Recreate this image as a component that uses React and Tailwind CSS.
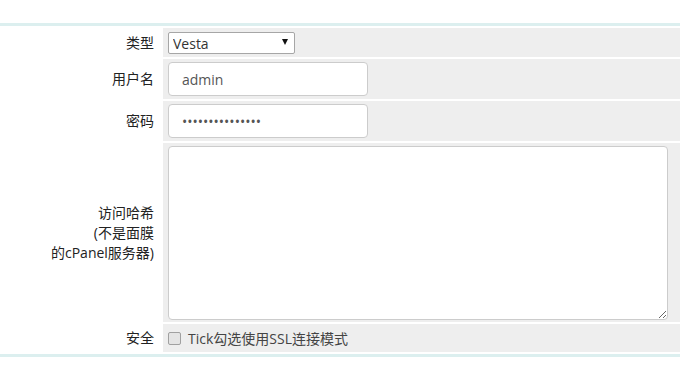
import { useState } from 'react'

const font = { fontFamily: '"Open Sans", "Noto Sans CJK SC", sans-serif' }

function Row({ label, height, children, className = '' }) {
  return (
    <div className="flex gap-[2px]">
      <div
        className="w-[161px] flex items-center justify-end pr-[7px] text-right text-[14px] leading-[20px] text-[#222]"
      >
        {label}
      </div>
      <div className={`flex-1 bg-[#eeeeee] pl-[5px] ${height} ${className}`}>{children}</div>
    </div>
  )
}

export default function App() {
  const [ssl, setSsl] = useState(false)

  return (
    <div className="w-[680px] h-[366px] bg-white pt-[23px]" style={font}>
      <div className="h-[3px] bg-[#dcefef]" />
      <div className="flex flex-col gap-[2px] mt-[2px]">
        <Row label="类型" height="h-[29px]" className="pt-[3px]">
          <div className="relative w-[127px] h-[22px]">
            <select
              defaultValue="Vesta"
              className="appearance-none w-full h-full border border-[#a6a6a6] rounded-[2px] bg-white pl-[4px] text-[14px] text-[#333] outline-none"
              style={font}
            >
              <option>Vesta</option>
              <option>cPanel</option>
            </select>
            <span className="absolute right-[7px] top-[8px] w-0 h-0 border-l-[3px] border-r-[3px] border-t-[6px] border-l-transparent border-r-transparent border-t-[#111] pointer-events-none" />
          </div>
        </Row>

        <Row label="用户名" height="h-[40px]" className="pt-[3px]">
          <input
            type="text"
            defaultValue="admin"
            className="w-[200px] h-[34px] border border-[#cccccc] rounded-[4px] bg-white px-[13px] text-[14px] text-[#555] outline-none"
            style={font}
          />
        </Row>

        <Row label="密码" height="h-[40px]" className="pt-[3px]">
          <input
            type="password"
            defaultValue="aaaaaaaaaaaaaaa"
            className="w-[200px] h-[34px] border border-[#cccccc] rounded-[4px] bg-white px-[13px] text-[14px] text-[#555] outline-none"
            style={font}
          />
        </Row>

        <Row
          label={
            <span>
              访问哈希
              <br />
              (不是面膜
              <br />
              的cPanel服务器)
            </span>
          }
          height="h-[179px]"
          className="pt-[3px]"
        >
          <textarea
            className="block w-[500px] h-[174px] border border-[#cccccc] rounded-[4px] bg-white px-[12px] py-[6px] text-[14px] text-[#555] outline-none"
            style={font}
          />
        </Row>

        <Row label="安全" height="h-[28px]" className="flex items-center">
          <label className="flex items-center text-[14px] text-[#444]">
            <input
              type="checkbox"
              checked={ssl}
              onChange={(e) => setSsl(e.target.checked)}
              className="appearance-none w-[13px] h-[13px] m-0 border border-[#a0a0a0] rounded-[2px] bg-[#e4e4e4] checked:bg-[#9ab]"
            />
            <span className="ml-[7px]">Tick勾选使用SSL连接模式</span>
          </label>
        </Row>
      </div>
      <div className="h-[3px] bg-[#dcefef] mt-[2px]" />
    </div>
  )
}
